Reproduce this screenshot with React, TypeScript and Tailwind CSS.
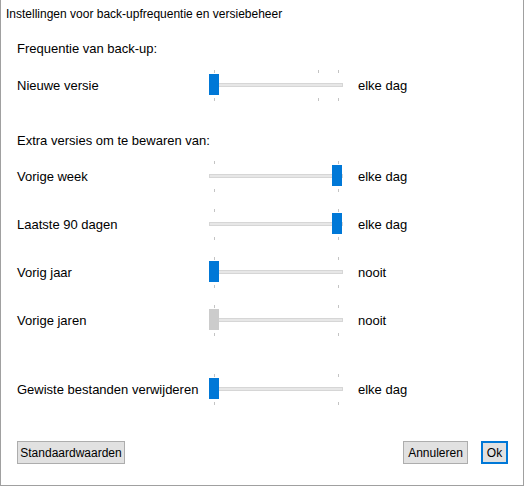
import React from "react";

type SliderProps = { pos: "left" | "right"; disabled?: boolean; midTick?: boolean };

function Slider({ pos, disabled, midTick }: SliderProps) {
  const ticks = midTick ? [5, 109, 129] : [5, 129];
  return (
    <div className="relative w-[134px] h-[32px] shrink-0">
      {ticks.map((x) => (
        <React.Fragment key={x}>
          <div className="absolute top-[1px] w-px h-[3px] bg-[#c4c4c4]" style={{ left: x }} />
          <div className="absolute top-[29px] w-px h-[3px] bg-[#c4c4c4]" style={{ left: x }} />
        </React.Fragment>
      ))}
      <div className="absolute left-0 top-[14px] w-[134px] h-[4px] bg-[#e7e7e7] border border-[#d6d6d6]" />
      <div
        className={
          "absolute top-[5px] w-[10px] h-[21px] " +
          (disabled ? "bg-[#cccccc]" : "bg-[#0078d7]") +
          (pos === "left" ? " left-0" : " left-[123px]")
        }
      />
    </div>
  );
}

function Row({ label, value, mt, pos, disabled, midTick }: { label: string; value: string; mt: string; pos: "left" | "right"; disabled?: boolean; midTick?: boolean }) {
  return (
    <div className={"flex items-center h-[32px] " + mt}>
      <div className="w-[192px] shrink-0 pt-[2px]">{label}</div>
      <Slider pos={pos} disabled={disabled} midTick={midTick} />
      <div className="ml-[15px] pt-[2px]">{value}</div>
    </div>
  );
}

export default function App() {
  return (
    <div
      className="w-[524px] h-[486px] bg-white border-l border-r border-b border-[#a0a0a0] flex flex-col text-black text-[13px] leading-[16px]"
      style={{ fontFamily: '"Liberation Sans", Arial, sans-serif' }}
    >
      <div className="pl-[5px] pt-[6px] h-[22px] text-[12px]">
        Instellingen voor back-upfrequentie en versiebeheer
      </div>
      <div className="pl-[16px] pr-[15px] flex flex-col">
        <div className="mt-[19px]">Frequentie van back-up:</div>
        <Row label="Nieuwe versie" value="elke dag" mt="mt-[12px]" pos="left" midTick />
        <div className="mt-[32px]">Extra versies om te bewaren van:</div>
        <Row label="Vorige week" value="elke dag" mt="mt-[11px]" pos="right" />
        <Row label="Laatste 90 dagen" value="elke dag" mt="mt-[16px]" pos="right" />
        <Row label="Vorig jaar" value="nooit" mt="mt-[16px]" pos="left" />
        <Row label="Vorige jaren" value="nooit" mt="mt-[16px]" pos="left" disabled />
        <Row label="Gewiste bestanden verwijderen" value="elke dag" mt="mt-[37px]" pos="left" />
        <div className="mt-[36px] flex items-center">
          <button className="w-[108px] h-[23px] bg-[#e1e1e1] border border-[#adadad] text-[12px] leading-none">
            Standaardwaarden
          </button>
          <div className="flex-1" />
          <button className="w-[65px] h-[23px] bg-[#e1e1e1] border border-[#adadad] text-[12px] leading-none">
            Annuleren
          </button>
          <button className="ml-[13px] w-[27px] h-[23px] bg-[#e1e1e1] border-2 border-[#0078d7] text-[12px] leading-none">
            Ok
          </button>
        </div>
      </div>
    </div>
  );
}
